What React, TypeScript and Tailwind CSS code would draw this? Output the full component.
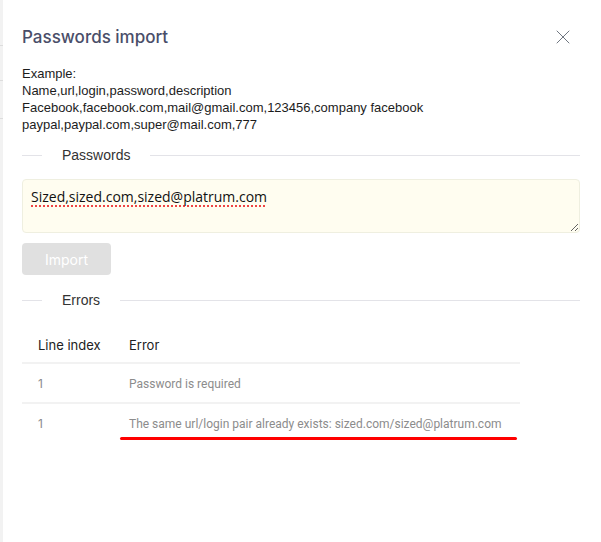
import { X } from 'lucide-react';

function Divider({ label }: { label: string }) {
  return (
    <div className="flex items-center">
      <div className="h-px w-[20px] bg-[#e3e3e8]" />
      <span className="px-[20px] font-['Liberation_Sans',sans-serif] text-[14px] leading-none text-[#333]">{label}</span>
      <div className="h-px flex-1 bg-[#e3e3e8]" />
    </div>
  );
}

const errors = [
  { line: 1, text: 'Password is required', marked: false },
  { line: 1, text: 'The same url/login pair already exists: sized.com/sized@platrum.com', marked: true },
];

export default function App() {
  return (
    <div className="flex min-h-[542px] bg-white font-['Inter',sans-serif]">
      <div className="relative w-[3px] shrink-0 bg-[#f2f2f2]">
        <div className="absolute left-0 top-[45px] h-px w-[3px] bg-[#ddd]" />
        <div className="absolute left-0 top-[80px] h-px w-[3px] bg-[#ddd]" />
        <div className="absolute left-0 top-[118px] h-px w-[3px] bg-[#ddd]" />
      </div>
      <div className="flex-1 pl-[19px] pr-[21px] pt-[26px]">
        <div className="flex items-start justify-between">
          <h1 className="text-[17px] font-medium leading-[22px] text-[#4a4e69]">Passwords import</h1>
          <button className="mr-[5px] mt-[-1px] text-[#6f7680]">
            <X size={24} strokeWidth={1} />
          </button>
        </div>

        <div className="mt-[16px] font-['Liberation_Sans',sans-serif] text-[13px] leading-[17px] text-[#1c1c1c]">
          <div>Example:</div>
          <div>Name,url,login,password,description</div>
          <div>Facebook,facebook.com,mail@gmail.com,123456,company facebook</div>
          <div>paypal,paypal.com,super@mail.com,777</div>
        </div>

        <div className="mt-[15px]">
          <Divider label="Passwords" />
        </div>

        <textarea
          className="mt-[17px] block h-[54px] w-full resize-y rounded-[4px] border border-[#efefe0] bg-[#fffdf0] px-[8px] py-[7px] font-['Open_Sans',sans-serif] text-[14px] leading-[20px] text-[#111] underline decoration-[#e44] decoration-dotted decoration-[1.5px] underline-offset-[3px] outline-none"
          defaultValue="Sized,sized.com,sized@platrum.com"
          spellCheck={false}
        />

        <button className="mt-[10px] block h-[32px] w-[89px] rounded-[4px] bg-[#e0e0e0] text-[14px] text-white">
          Import
        </button>

        <div className="mt-[18px]">
          <Divider label="Errors" />
        </div>

        <table className="mt-[21px] w-[498px] border-collapse text-left">
          <thead>
            <tr className="border-b-2 border-[#f2f2f2]">
              <th className="w-[107px] pb-[6px] pl-[16px] pt-[8px] text-[13px] font-normal text-[#222]">Line index</th>
              <th className="pb-[6px] pt-[8px] text-[13px] font-normal text-[#222]">Error</th>
            </tr>
          </thead>
          <tbody>
            {errors.map((e, i) => (
              <tr key={i} className={i < errors.length - 1 ? 'border-b-2 border-[#f2f2f2]' : ''}>
                <td className="pb-[9px] pl-[16px] pt-[11px] text-[12px] text-[#8c8c8c]">{e.line}</td>
                <td className="relative pb-[9px] pt-[11px] font-['Roboto',sans-serif] text-[12px] text-[#8c8c8c]">
                  {e.text}
                  {e.marked && (
                    <div className="absolute left-[-9px] top-[33px] h-[3px] w-[397px] rounded-full bg-[#ff0000]" />
                  )}
                </td>
              </tr>
            ))}
          </tbody>
        </table>
      </div>
    </div>
  );
}
